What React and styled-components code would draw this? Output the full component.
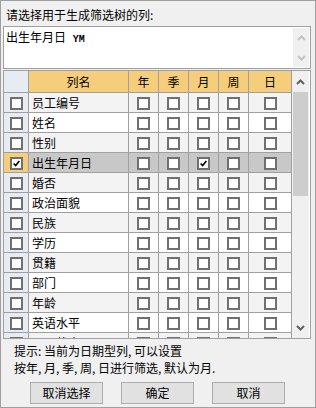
import React from "react";
import styled, { createGlobalStyle } from "styled-components";

const GlobalStyle = createGlobalStyle`
  html, body {
    margin: 0;
    padding: 0;
    background: #f0f0f0;
  }
  body {
    font-family: "Noto Sans CJK SC", "Liberation Sans", sans-serif;
    font-size: 12px;
    color: #000;
  }
`;

const periods = ["年", "季", "月", "周", "日"];

const fields = [
  "员工编号",
  "姓名",
  "性别",
  "出生年月日",
  "婚否",
  "政治面貌",
  "民族",
  "学历",
  "贯籍",
  "部门",
  "年龄",
  "英语水平",
  "员工状态",
];

const SELECTED = 3;

const Chevron = ({ up, color }) => (
  <svg width="9" height="6" viewBox="0 0 9 6">
    <polyline
      points={up ? "1,5 4.5,1.5 8,5" : "1,1 4.5,4.5 8,1"}
      fill="none"
      stroke={color}
      strokeWidth="2"
    />
  </svg>
);

const Tick = () => (
  <svg width="11" height="11" viewBox="0 0 11 11">
    <polyline points="2,5.5 4.5,8 9,2.5" fill="none" stroke="#000" strokeWidth="2" />
  </svg>
);

const CheckBox = ({ checked }) => <Box>{checked && <Tick />}</Box>;

const App = () => {
  return (
    <>
      <GlobalStyle />
      <Window>
        <Label>请选择用于生成筛选树的列:</Label>
        <TextBox>
          <TextContent>
            出生年月日 <Code>YM</Code>
          </TextContent>
          <VScroll>
            <ArrowBtn>
              <Chevron up color="#c4c4c4" />
            </ArrowBtn>
            <ArrowBtn>
              <Chevron color="#c4c4c4" />
            </ArrowBtn>
          </VScroll>
        </TextBox>
        <GridFrame>
          <Table>
            <Cell $kind="corner" />
            <Cell $kind="head">列名</Cell>
            {periods.map((p) => (
              <Cell key={p} $kind="head">
                {p}
              </Cell>
            ))}
            {fields.map((name, i) => {
              const sel = i === SELECTED;
              const tone = sel ? "sel" : i % 2 === 0 ? "alt" : "plain";
              return (
                <React.Fragment key={name}>
                  <Cell $kind={sel ? "rowhdrSel" : "rowhdr"}>
                    <CheckBox checked={sel} />
                  </Cell>
                  <Cell $kind={tone} $left>
                    {name}
                  </Cell>
                  {periods.map((p) => (
                    <Cell key={p} $kind={tone}>
                      <CheckBox checked={sel && p === "月"} />
                    </Cell>
                  ))}
                </React.Fragment>
              );
            })}
          </Table>
          <GridScroll>
            <ArrowBtn $h={21}>
              <Chevron up color="#606060" />
            </ArrowBtn>
            <Thumb />
            <Spacer />
            <ArrowBtn $h={20}>
              <Chevron color="#606060" />
            </ArrowBtn>
          </GridScroll>
        </GridFrame>
        <Hint>
          <HintLine>提示: 当前为日期型列, 可以设置</HintLine>
          <HintLine>按年, 月, 季, 周, 日进行筛选, 默认为月.</HintLine>
        </Hint>
        <Buttons>
          <Button>取消选择</Button>
          <Button>确定</Button>
          <Button>取消</Button>
        </Buttons>
      </Window>
    </>
  );
};

export default App;

const Window = styled.div`
  width: 316px;
  height: 408px;
  box-sizing: border-box;
  border: 1px solid #a0a0a0;
  background: #f0f0f0;
  padding: 0 4px 0 2px;
  display: flex;
  flex-direction: column;
  overflow: hidden;
`;

const Label = styled.div`
  height: 25px;
  box-sizing: border-box;
  padding: 5px 0 0 3px;
  line-height: 17px;
  white-space: nowrap;
`;

const TextBox = styled.div`
  height: 43px;
  box-sizing: border-box;
  border: 1px solid #a0a0a0;
  background: #fff;
  display: flex;
  margin-bottom: 1px;
`;

const TextContent = styled.div`
  flex: 1;
  padding: 1px 2px;
  line-height: 17px;
`;

const Code = styled.span`
  font-family: "Liberation Mono", monospace;
  font-size: 10px;
  font-weight: bold;
  margin-left: 4px;
`;

const VScroll = styled.div`
  width: 16px;
  margin: 1px 1px 1px 0;
  background: #f0f0f0;
  display: flex;
  flex-direction: column;
  justify-content: space-between;
`;

const ArrowBtn = styled.div`
  height: ${(p) => p.$h || 19}px;
  display: flex;
  align-items: center;
  justify-content: center;
  flex-shrink: 0;
`;

const GridFrame = styled.div`
  height: 269px;
  box-sizing: border-box;
  border: 1px solid #a0a0a0;
  display: flex;
  background: #fff;
`;

const Table = styled.div`
  width: 288px;
  height: 267px;
  overflow: hidden;
  display: grid;
  grid-template-columns: 25px 100px 30px 30px 30px 30px 43px;
  grid-auto-rows: 20px;
  grid-template-rows: 22px;
  align-content: start;
`;

const cellBg = {
  corner: "#e7ebf2",
  head: "#f6cd7b",
  rowhdr: "#e7ebf2",
  rowhdrSel: "#f6cd7b",
  alt: "#f3f3f3",
  plain: "#ffffff",
  sel: "#c8c8c8",
};

const Cell = styled.div`
  box-sizing: border-box;
  border-right: 1px solid #a0a0a0;
  border-bottom: 1px solid #a0a0a0;
  background: ${(p) => cellBg[p.$kind]};
  display: flex;
  align-items: center;
  justify-content: ${(p) => (p.$left ? "flex-start" : "center")};
  padding-left: ${(p) => (p.$left ? 3 : 0)}px;
  padding-top: 1px;
  white-space: nowrap;
  line-height: 14px;
`;

const Box = styled.div`
  width: 13px;
  height: 13px;
  box-sizing: border-box;
  border: 2px solid #707070;
  background: #fff;
  display: flex;
  align-items: center;
  justify-content: center;
`;

const GridScroll = styled.div`
  width: 17px;
  background: #f0f0f0;
  display: flex;
  flex-direction: column;
`;

const Thumb = styled.div`
  height: 104px;
  margin: 0 1px;
  background: #cdcdcd;
`;

const Spacer = styled.div`
  flex: 1;
`;

const Hint = styled.div`
  height: 43px;
  box-sizing: border-box;
  padding: 3px 0 0 11px;
  display: flex;
  flex-direction: column;
`;

const HintLine = styled.div`
  height: 17px;
  line-height: 17px;
  white-space: nowrap;
`;

const Buttons = styled.div`
  display: flex;
  gap: 18px;
  padding-left: 27px;
`;

const Button = styled.button`
  width: 73px;
  height: 22px;
  box-sizing: border-box;
  border: 1px solid #adadad;
  background: #e1e1e1;
  font-family: "Noto Sans CJK SC", "Liberation Sans", sans-serif;
  font-size: 12px;
  color: #000;
  padding: 0;
  line-height: 14px;
`;
